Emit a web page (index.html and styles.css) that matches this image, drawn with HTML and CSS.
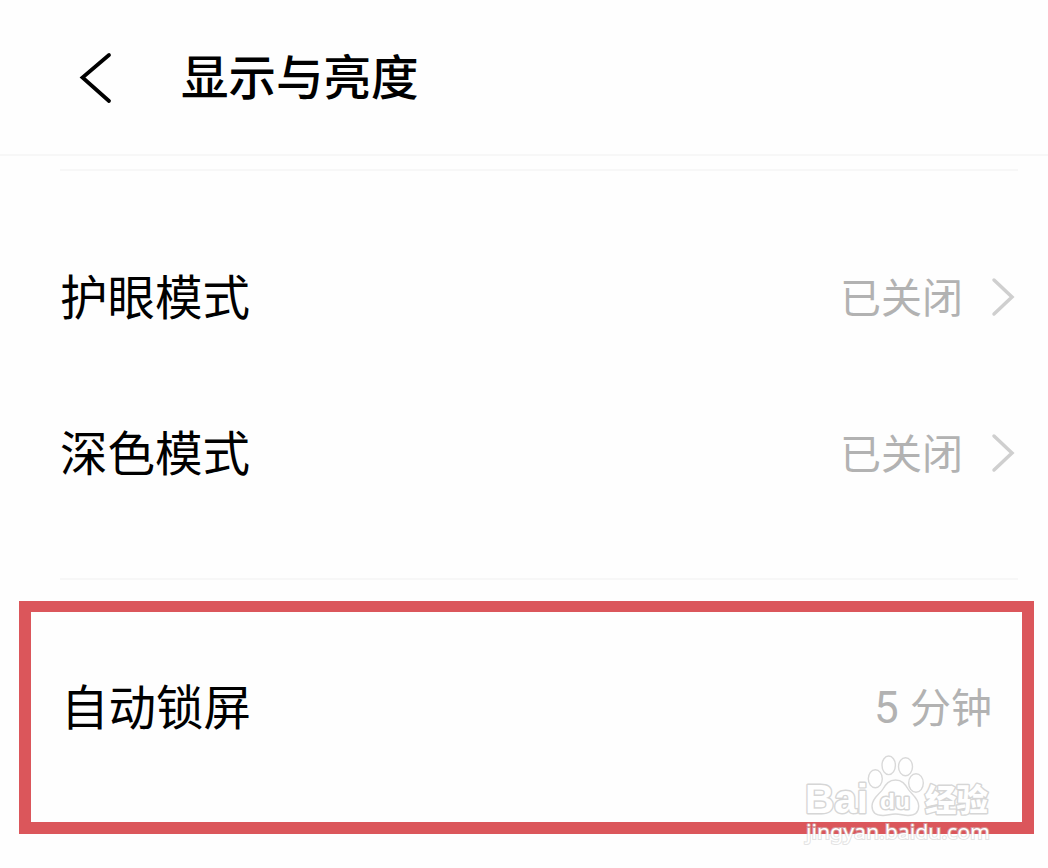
FILE: index.html
```
<!DOCTYPE html>
<html lang="zh-CN">
<head>
    <meta charset="UTF-8">
    <meta name="viewport" content="width=device-width, initial-scale=1.0">
    <title>显示与亮度</title>
    <link rel="stylesheet" href="styles.css">
</head>
<body>
    <div class="screen">
        <header class="header">
            <svg class="back" width="34" height="54" viewBox="0 0 34 54">
                <path d="M30 5L3.5 27.5L30 51"/>
            </svg>
            <h1>显示与亮度</h1>
        </header>

        <main>
            <div class="group">
                <div class="row">
                    <span class="label">护眼模式</span>
                    <span class="value">已关闭</span>
                    <svg class="arrow" width="24" height="40" viewBox="0 0 24 40">
                        <path d="M3 3L21 20L3 37"/>
                    </svg>
                </div>
                <div class="row">
                    <span class="label">深色模式</span>
                    <span class="value">已关闭</span>
                    <svg class="arrow" width="24" height="40" viewBox="0 0 24 40">
                        <path d="M3 3L21 20L3 37"/>
                    </svg>
                </div>
            </div>

            <div class="highlight">
                <span class="label">自动锁屏</span>
                <span class="value"><span class="num">5</span> 分钟</span>
            </div>
        </main>

        <svg class="watermark" width="200" height="100" viewBox="0 0 200 100">
            <text class="brand" x="5" y="62.5" textLength="63" lengthAdjust="spacingAndGlyphs">Bai</text>
            <ellipse cx="75.3" cy="28.7" rx="7" ry="9"/>
            <ellipse cx="88.7" cy="15.3" rx="6.7" ry="9.3"/>
            <ellipse cx="105.5" cy="16.7" rx="7" ry="9"/>
            <ellipse cx="116" cy="33" rx="7.3" ry="9.3"/>
            <path d="M95.5 30C89 30 86 34 83 39C80 44 72 48 72 56C72 62 76 65.5 83 65.5C88 65.5 90 64 95.5 64C101 64 103 65.5 108 65.5C115 65.5 118.7 62 118.7 56C118.7 48 111 44 108 39C105 34 102 30 95.5 30Z"/>
            <text class="du" x="80" y="59" textLength="30" lengthAdjust="spacingAndGlyphs">du</text>
            <text class="cn" x="125" y="61" textLength="63" lengthAdjust="spacingAndGlyphs">经验</text>
            <text class="url" x="6" y="88.5" textLength="184" lengthAdjust="spacingAndGlyphs">jingyan.baidu.com</text>
        </svg>
    </div>
</body>
</html>
```

FILE: styles.css
```
* {
    box-sizing: border-box;
}

body {
    margin: 0;
    background-color: #fefefe;
    font-family: "Noto Sans CJK SC", sans-serif;
    color: #000;
}

.screen {
    position: relative;
    width: 1048px;
    height: 868px;
    overflow: hidden;
}

.header {
    display: flex;
    align-items: center;
    height: 156px;
    padding-left: 79px;
    border-bottom: 2px solid #f7f7f7;
}

.back {
    fill: none;
    stroke: #000;
    stroke-width: 3.8;
    stroke-linecap: round;
}

h1 {
    margin: 0 0 0 68px;
    padding-bottom: 4px;
    font-size: 47.5px;
    font-weight: 500;
    line-height: 72px;
}

.group {
    margin: 13px 30px 0 60px;
    padding: 48px 0 47px;
    border-top: 2px solid #f7f7f7;
    border-bottom: 2px solid #f7f7f7;
}

.row {
    display: flex;
    align-items: center;
    height: 156px;
    padding-right: 3px;
}

.label {
    flex: 1;
    padding-bottom: 4px;
    font-size: 47.5px;
    line-height: 72px;
}

.value {
    padding-bottom: 5px;
    font-size: 41px;
    line-height: 60px;
    color: #b2b2b2;
}

.num {
    margin-right: 2px;
    font-family: Roboto, sans-serif;
    font-size: 44px;
    line-height: 1;
}

.arrow {
    margin-left: 28px;
    fill: none;
    stroke: #cfcfcf;
    stroke-width: 3.5;
    stroke-linecap: round;
}

.highlight {
    display: flex;
    align-items: center;
    height: 233px;
    margin: 21px 14px 0 19px;
    padding: 0 30px 20px 30px;
    border: 12px solid #db565b;
    border-top-width: 11px;
}

/* watermark lies over the lower right corner of the box */
.watermark {
    position: absolute;
    left: 800px;
    top: 750px;
    fill: #fff;
    stroke: #d9d9d9;
    stroke-width: 1.4;
}

.brand,
.du,
.cn {
    stroke: #d6d6d6;
    stroke-width: 2.8;
    stroke-linejoin: round;
    paint-order: stroke;
}

.brand {
    font: bold 40px "Liberation Sans", sans-serif;
}

.du {
    font: bold 22px "Liberation Sans", sans-serif;
}

.cn {
    font-size: 31px;
    font-weight: 900;
}

.url {
    font: 20px "Noto Sans", sans-serif;
    stroke: #ccc;
    stroke-opacity: 0.55;
    stroke-width: 2;
    paint-order: stroke;
}
```
